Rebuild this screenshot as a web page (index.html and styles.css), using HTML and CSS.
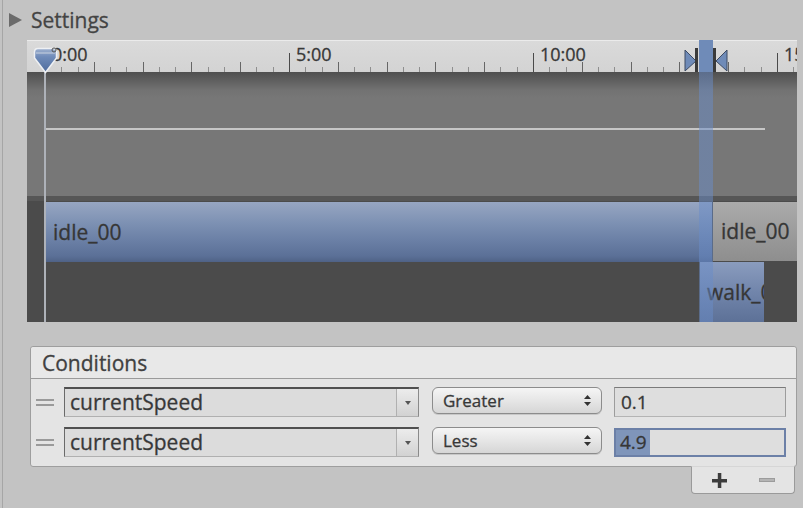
FILE: index.html
```html
<!DOCTYPE html>
<html>
<head>
<meta charset="utf-8">
<link rel="stylesheet" href="styles.css">
</head>
<body>
<div class="app">
  <div class="settings-head"><span class="disclosure"></span><span class="settings-title">Settings</span></div>

  <div class="timeline">
    <div class="ruler">
      <div class="ruler-lead"></div>
      <div class="ruler-seg"><span class="ruler-label">0:00</span></div>
      <div class="ruler-seg"><span class="ruler-label">5:00</span></div>
      <div class="ruler-seg"><span class="ruler-label">10:00</span></div>
      <div class="ruler-seg"><span class="ruler-label">15:00</span></div>
    </div>
    <div class="curves"><div class="curve-line"></div></div>
    <div class="lane-sep"></div>
    <div class="lane lane-top">
      <div class="lane-gutter"></div>
      <div class="clip clip-blue clip-idle">idle_00</div>
      <div class="clip clip-gray">idle_00</div>
    </div>
    <div class="lane lane-bottom">
      <div class="lane-gutter"></div>
      <div class="lane-gap"></div>
      <div class="clip clip-blue clip-walk">walk_00</div>
    </div>

    <div class="playhead-line"></div>
    <svg class="playhead" width="25" height="27" viewBox="0 0 25 27">
      <defs>
        <linearGradient id="ph" x1="0" y1="0" x2="0" y2="1">
          <stop offset="0" stop-color="#9fb1cf"/>
          <stop offset="0.35" stop-color="#6f8bb9"/>
          <stop offset="1" stop-color="#4e6b9c"/>
        </linearGradient>
      </defs>
      <path d="M1.5 5 Q1.5 1.5 5 1.5 H20 Q23.5 1.5 23.5 5 V11 L12.5 25.5 L1.5 11 Z" fill="url(#ph)" stroke="#eef0f3" stroke-width="1.5"/>
      <path d="M3 6 H22" stroke="#c9d2e0" stroke-width="1"/>
      <circle cx="21" cy="3" r="2" fill="none" stroke="#555" stroke-width="1"/>
    </svg>

    <div class="transition-band"></div>
    <svg class="transition-marks" width="48" height="32" viewBox="0 0 48 32">
      <polygon points="3,10 14,21 3,31" fill="#6f8bb8" stroke="#3c4a62" stroke-width="1"/>
      <rect x="13" y="8" width="3" height="24" fill="#3a3a3a"/>
      <rect x="31" y="8" width="3" height="24" fill="#3a3a3a"/>
      <polygon points="45,10 34,21 45,31" fill="#6f8bb8" stroke="#3c4a62" stroke-width="1"/>
    </svg>
  </div>

  <div class="conditions">
    <div class="cond-header">Conditions</div>
    <div class="cond-list">
      <div class="cond-row">
        <span class="handle"></span>
        <div class="popup">
          <span class="popup-text">currentSpeed</span>
          <span class="popup-arrow"><svg width="6" height="4" viewBox="0 0 6 4"><polygon points="0,0 6,0 3,4" fill="#555"/></svg></span>
        </div>
        <div class="select-btn">
          <span class="select-text">Greater</span>
          <svg class="updown" width="7" height="11" viewBox="0 0 7 11"><polygon points="0,4 3.5,0 7,4" fill="#333"/><polygon points="0,7 7,7 3.5,11" fill="#333"/></svg>
        </div>
        <div class="field">0.1</div>
      </div>
      <div class="cond-row">
        <span class="handle"></span>
        <div class="popup">
          <span class="popup-text">currentSpeed</span>
          <span class="popup-arrow"><svg width="6" height="4" viewBox="0 0 6 4"><polygon points="0,0 6,0 3,4" fill="#555"/></svg></span>
        </div>
        <div class="select-btn">
          <span class="select-text">Less</span>
          <svg class="updown" width="7" height="11" viewBox="0 0 7 11"><polygon points="0,4 3.5,0 7,4" fill="#333"/><polygon points="0,7 7,7 3.5,11" fill="#333"/></svg>
        </div>
        <div class="field field-focus"><span class="selection">4.9</span></div>
      </div>
    </div>
  </div>

  <div class="cond-footer">
    <span class="foot-btn"><svg width="15" height="15" viewBox="0 0 15 15"><rect x="0" y="6" width="15" height="3.5" fill="#3c3c3c"/><rect x="5.8" y="0" width="3.5" height="15" fill="#3c3c3c"/></svg></span>
    <span class="foot-btn"><svg width="16" height="4" viewBox="0 0 16 4"><rect x="0.5" y="0.5" width="15" height="3" fill="#b4b4b4" stroke="#9c9c9c" stroke-width="1"/></svg></span>
  </div>
</div>
</body>
</html>
```

FILE: styles.css
```css
html, body {
  margin: 0;
  padding: 0;
}
body {
  background: #c3c3c3;
  font-family: "Open Sans", "Liberation Sans", sans-serif;
  width: 803px;
  height: 508px;
  overflow: hidden;
  -webkit-text-stroke: 0.3px currentColor;
}
.app {
  margin-left: 2px;
  border-left: 1px solid #a6a6a6;
  height: 508px;
  box-sizing: border-box;
}

/* Settings header */
.settings-head {
  height: 40px;
  display: flex;
  align-items: center;
  padding-left: 6px;
  box-sizing: border-box;
}
.disclosure {
  width: 0;
  height: 0;
  border-top: 7.5px solid transparent;
  border-bottom: 7.5px solid transparent;
  border-left: 13px solid #6b6b6b;
  margin-right: 9px;
}
.settings-title {
  font-size: 21px;
  color: #444;
  line-height: 1;
}

/* Timeline */
.timeline {
  margin-left: 24px;
  width: 770px;
  height: 282px;
  position: relative;
  overflow: hidden;
  background: #4b4b4b;
}
.ruler {
  height: 32px;
  display: flex;
  background: linear-gradient(#ebebeb 0 1px, #dadada 1px, #d3d3d3);
}
.ruler-lead {
  width: 18px;
  flex: none;
}
.ruler-seg {
  width: 244px;
  flex: none;
  box-sizing: border-box;
  padding: 5px 0 0 7px;
  font-size: 18px;
  line-height: 18px;
  color: #383838;
  background:
    linear-gradient(#4a4a4a, #4a4a4a) 0 100% / 1px 19px no-repeat,
    repeating-linear-gradient(to right, #666 0 1px, transparent 1px 48.8px) 0 100% / 100% 10px no-repeat,
    repeating-linear-gradient(to right, #8e8e8e 0 1px, transparent 1px 16.267px) 0 100% / 100% 5px no-repeat;
}
.ruler-label {
  white-space: nowrap;
}
.curves {
  height: 124px;
  box-sizing: border-box;
  padding-top: 56px;
  background: linear-gradient(#4f4f4f, #626262 10px, #727272 18px, #777 26px, #777 100%);
}
.curve-line {
  margin-left: 18px;
  width: 720px;
  height: 2px;
  background: #c6c6c6;
}
.lane-sep {
  height: 5px;
  background: #565656;
}
.lane {
  display: flex;
  align-items: flex-start;
}
.lane-top {
  height: 61px;
}
.lane-bottom {
  height: 60px;
}
.lane-gutter {
  width: 19px;
  flex: none;
}
.lane-gap {
  width: 654px;
  flex: none;
}
.clip {
  flex: none;
  box-sizing: border-box;
  overflow: hidden;
  white-space: nowrap;
  font-size: 21px;
  color: #363636;
}
.clip-blue {
  background: linear-gradient(#97a6c2, #7d91b3 35%, #6a7fa5 65%, #5b7097 90%, #4f6286);
}
.clip-idle {
  width: 666px;
  height: 60px;
  margin-top: 1px;
  line-height: 60px;
  padding-left: 7px;
}
.clip-gray {
  width: 84px;
  height: 59px;
  margin-top: 1px;
  margin-left: 1px;
  line-height: 59px;
  padding-left: 8px;
  background: linear-gradient(#ababab, #9c9c9c 50%, #8e8e8e);
}
.clip-walk {
  width: 64px;
  height: 60px;
  line-height: 60px;
  padding-left: 7px;
  background: linear-gradient(#8a9cbe, #7185ab 50%, #5d7197);
}
.playhead-line {
  position: absolute;
  left: 17px;
  top: 32px;
  bottom: 0;
  width: 2px;
  background: #aeb2b9;
}
.playhead {
  position: absolute;
  left: 6px;
  top: 7px;
}
.transition-band {
  position: absolute;
  left: 672px;
  top: 0;
  bottom: 0;
  width: 14px;
  background: linear-gradient(#6f8bb8 0 32px, rgba(105, 140, 200, 0.5) 32px);
}
.transition-marks {
  position: absolute;
  left: 655px;
  top: 0;
}

/* Conditions */
.conditions {
  margin: 24px 0 0 27px;
  width: 767px;
  height: 121px;
  box-sizing: border-box;
  border: 1px solid #9e9e9e;
  border-radius: 3px;
  background: #e4e4e4;
}
.cond-header {
  height: 31px;
  border-bottom: 1px solid #9a9a9a;
  padding-left: 11px;
  display: flex;
  align-items: center;
  font-size: 21px;
  color: #404040;
  background: #e8e8e8;
  border-radius: 3px 3px 0 0;
}
.cond-list {
  padding: 8px 0 0 5px;
  display: flex;
  flex-direction: column;
  gap: 10px;
}
.cond-row {
  display: flex;
  align-items: flex-start;
  height: 30px;
}
.handle {
  width: 18px;
  height: 30px;
  flex: none;
  background:
    linear-gradient(#9a9a9a, #9a9a9a) 0 12px / 18px 2px no-repeat,
    linear-gradient(#9a9a9a, #9a9a9a) 0 17px / 18px 2px no-repeat;
}
.popup {
  margin-left: 10px;
  width: 355px;
  height: 30px;
  flex: none;
  box-sizing: border-box;
  display: flex;
  border-top: 2px solid #505050;
  border-left: 1px solid #6a6a6a;
  border-right: 1px solid #8a8a8a;
  border-bottom: 1px solid #b0b0b0;
  background: #dcdcdc;
}
.popup-text {
  flex: 1;
  padding-left: 5px;
  font-size: 21px;
  line-height: 26px;
  color: #383838;
}
.popup-arrow {
  width: 21px;
  flex: none;
  border-left: 1px solid #b0b0b0;
  background: linear-gradient(#ececec, #d2d2d2);
  display: flex;
  align-items: center;
  justify-content: center;
}
.select-btn {
  margin-left: 13px;
  width: 170px;
  height: 27px;
  flex: none;
  box-sizing: border-box;
  border: 1px solid #8c8c8c;
  border-radius: 6px;
  background: linear-gradient(#f5f5f5, #e6e6e6 50%, #d6d6d6);
  display: flex;
  align-items: center;
  padding: 0 10px 0 10px;
  box-shadow: 0 1px 0 #c8c8c8;
}
.select-text {
  flex: 1;
  font-size: 17px;
  color: #383838;
}
.updown {
  flex: none;
}
.field {
  margin-left: 12px;
  width: 172px;
  height: 30px;
  flex: none;
  box-sizing: border-box;
  border-top: 1px solid #7a7a7a;
  border-left: 1px solid #9c9c9c;
  border-right: 1px solid #9c9c9c;
  border-bottom: 1px solid #b4b4b4;
  background: #dedede;
  font-size: 19px;
  line-height: 28px;
  color: #383838;
  padding-left: 6px;
}
.field-focus {
  margin-top: 1px;
  height: 29px;
  border: 2px solid #6c80a7;
  padding-left: 0;
  line-height: 25px;
}
.selection {
  display: inline-block;
  height: 25px;
  padding: 0 3px 0 4px;
  background: #7f95ba;
  color: #363636;
}
.cond-footer {
  margin-left: 688px;
  width: 104px;
  height: 28px;
  box-sizing: border-box;
  border: 1px solid #9a9a9a;
  border-top: 1px solid #d6d6d6;
  margin-top: -1px;
  border-radius: 0 0 4px 4px;
  background: #e4e4e4;
  display: flex;
  align-items: center;
  padding-left: 3px;
}
.foot-btn {
  width: 48px;
  display: flex;
  justify-content: center;
  align-items: center;
}
```
